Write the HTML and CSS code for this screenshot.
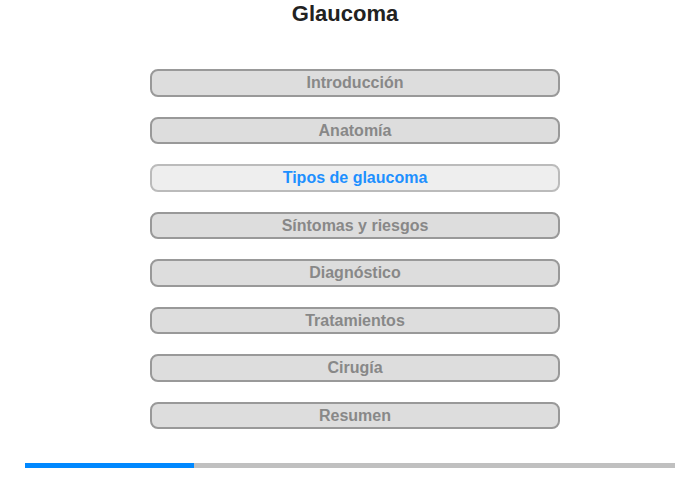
FILE: index.html
```html
<!DOCTYPE html>
<html lang="es">
<head>
<meta charset="utf-8">
<title>Glaucoma</title>
<link rel="stylesheet" href="styles.css">
</head>
<body>
<div class="page">
  <h1 class="title">Glaucoma</h1>
  <nav class="menu">
    <div class="item">Introducción</div>
    <div class="item">Anatomía</div>
    <div class="item active">Tipos de glaucoma</div>
    <div class="item">Síntomas y riesgos</div>
    <div class="item">Diagnóstico</div>
    <div class="item">Tratamientos</div>
    <div class="item">Cirugía</div>
    <div class="item">Resumen</div>
  </nav>
  <div class="progress"><div class="fill" style="width:169px"></div></div>
</div>
</body>
</html>
```
FILE: styles.css
```css
html, body {
  margin: 0;
  padding: 0;
  background: #fff;
}
body {
  font-family: "Liberation Sans", Arial, sans-serif;
}
.page {
  width: 700px;
  height: 480px;
  display: flex;
  flex-direction: column;
  align-items: center;
}
.title {
  margin: 1px 10px 0 0;
  font-size: 22px;
  line-height: 26px;
  font-weight: bold;
  color: #222;
}
.menu {
  margin: 42px 0 0 10px;
  display: flex;
  flex-direction: column;
  gap: 20px;
}
.item {
  box-sizing: border-box;
  width: 410px;
  height: 27.5px;
  border: 2px solid #999;
  border-radius: 8px;
  background: #ddd;
  color: #888;
  font-size: 16px;
  font-weight: bold;
  line-height: 23.5px;
  text-align: center;
}
.item.active {
  border-color: #bbb;
  background: #eee;
  color: #1e90ff;
}
.progress {
  margin-top: 33.5px;
  width: 650px;
  height: 5px;
  background: #c0c0c0;
}
.fill {
  height: 100%;
  background: #0088ff;
}
```
